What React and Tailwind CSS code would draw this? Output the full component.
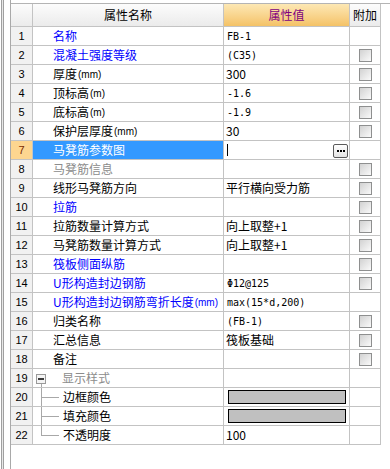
import React from 'react';

const CJK = { fontFamily: '"Noto Sans CJK SC", "Liberation Sans", sans-serif' };
const MONO = { fontFamily: '"DejaVu Sans Mono", "Liberation Mono", "Noto Sans CJK SC", monospace' };

const rows = [
  { n: 1, name: '名称', tone: 'blue', value: 'FB-1', mono: true },
  { n: 2, name: '混凝土强度等级', tone: 'blue', value: '(C35)', mono: true, cb: true },
  { n: 3, name: '厚度', unit: '(mm)', value: '300', cb: true },
  { n: 4, name: '顶标高', unit: '(m)', value: '-1.6', mono: true, cb: true },
  { n: 5, name: '底标高', unit: '(m)', value: '-1.9', mono: true, cb: true },
  { n: 6, name: '保护层厚度', unit: '(mm)', value: '30', cb: true },
  { n: 7, name: '马凳筋参数图', selected: true },
  { n: 8, name: '马凳筋信息', tone: 'gray', value: '', cb: true },
  { n: 9, name: '线形马凳筋方向', value: '平行横向受力筋', cb: true },
  { n: 10, name: '拉筋', tone: 'blue', value: '', cb: true },
  { n: 11, name: '拉筋数量计算方式', value: '向上取整+1', cb: true },
  { n: 12, name: '马凳筋数量计算方式', value: '向上取整+1', cb: true },
  { n: 13, name: '筏板侧面纵筋', tone: 'blue', value: '', cb: true },
  { n: 14, name: 'U形构造封边钢筋', tone: 'blue', value: 'Φ12@125', mono: true, cb: true },
  { n: 15, name: 'U形构造封边钢筋弯折长度', unit: '(mm)', tone: 'blue', value: 'max(15*d,200)', mono: true },
  { n: 16, name: '归类名称', value: '(FB-1)', mono: true, cb: true },
  { n: 17, name: '汇总信息', value: '筏板基础', cb: true },
  { n: 18, name: '备注', value: '', cb: true },
  { n: 19, name: '显示样式', tone: 'gray', group: true },
  { n: 20, name: '边框颜色', child: true, swatch: true },
  { n: 21, name: '填充颜色', child: true, swatch: true },
  { n: 22, name: '不透明度', child: true, value: '100', last: true },
];

const toneClass = {
  blue: 'text-[#0000ff]',
  gray: 'text-[#8c8c8c]',
};

const Checkbox = () => (
  <div className="w-[13px] h-[13px] border border-[#8e8f8f] bg-linear-to-br from-[#d2d2d2] to-[#fafafa]" />
);

const TreeLines = ({ row }) => {
  if (row.group) {
    return (
      <div className="relative w-[29px] h-full shrink-0">
        <div className="absolute left-[3px] top-[5px] w-[10px] h-[10px] border border-[#9a9a9a] bg-[#f4f4f4] flex items-center justify-center">
          <div className="w-[6px] h-[2px] bg-[#3a3a3a]" />
        </div>
        <div className="absolute left-[8px] top-[15px] bottom-[-1px] w-px bg-[#a8a8a8]" />
      </div>
    );
  }
  return (
    <div className="relative w-[30px] h-full shrink-0">
      <div className={`absolute left-[8px] top-[-1px] w-px bg-[#a8a8a8] ${row.last ? 'h-[10px]' : 'bottom-[-1px]'}`} />
      <div className="absolute left-[8px] top-[9px] w-[18px] h-px bg-[#a8a8a8]" />
    </div>
  );
};

const Row = ({ row }) => {
  const nameTone = row.selected ? 'text-white' : toneClass[row.tone] || 'text-black';
  return (
    <>
      <div
        className={`h-[19px] border-r border-b border-[#c3c3c3] flex items-center justify-center text-[11px] ${
          row.selected ? 'bg-[#fdd690] text-[#7b2b00]' : 'bg-[#f1f1f1] text-black'
        }`}
        style={{ fontFamily: '"Liberation Sans", sans-serif' }}
      >
        {row.n}
      </div>
      <div
        className={`h-[19px] border-r border-b border-[#c3c3c3] flex items-center text-[12px] whitespace-nowrap overflow-hidden ${
          row.selected ? 'bg-[#3399ff]' : 'bg-white'
        } ${row.group || row.child ? '' : 'pl-[20px]'} ${nameTone}`}
        style={CJK}
      >
        {(row.group || row.child) && <TreeLines row={row} />}
        <span>{row.name}</span>
        {row.unit && (
          <span className="text-[10px] ml-[1px]" style={{ fontFamily: '"Liberation Sans", sans-serif' }}>
            {row.unit}
          </span>
        )}
      </div>
      <div className="relative h-[19px] border-r border-b border-[#c3c3c3] bg-white flex items-center pl-[2px] text-[12px] text-black whitespace-nowrap overflow-hidden">
        {row.selected && (
          <>
            <div className="ml-[1px] w-px h-[12px] bg-black" />
            <div className="absolute right-[1px] top-[3px] w-[15px] h-[14px] rounded-[2px] border border-[#5a5a5a] bg-linear-to-b from-white to-[#e4e4e4] flex items-center justify-center gap-[1px]">
              <span className="w-[2px] h-[2px] bg-black" />
              <span className="w-[2px] h-[2px] bg-black" />
              <span className="w-[2px] h-[2px] bg-black" />
            </div>
          </>
        )}
        {row.swatch && (
          <div className="ml-[2px] w-[118px] h-[14px] border border-black bg-[#c0c0c0]" />
        )}
        {row.value && (
          <span className={row.mono ? 'text-[10px] ml-[1px]' : ''} style={row.mono ? MONO : CJK}>
            {row.value}
          </span>
        )}
      </div>
      <div className="h-[19px] border-r border-b border-[#c3c3c3] bg-white flex items-center justify-center">
        {row.cb && <Checkbox />}
      </div>
    </>
  );
};

export default function App() {
  return (
    <div className="w-[390px] h-[469px] bg-white flex overflow-hidden">
      {/* left splitter strip */}
      <div className="w-[10px] h-full flex shrink-0">
        <div className="w-px h-full bg-white" />
        <div className="w-px h-full bg-[#a0a0a0]" />
        <div className="w-px h-full bg-[#e8e8e8]" />
        <div className="w-px h-full bg-[#a0a0a0]" />
        <div className="flex-1 h-full bg-white" />
      </div>

      <div className="flex-1 h-full border-l border-[#a9a9a9] pt-[3px]">
        <div className="border-t border-[#b4b4b4]">
          <div className="grid grid-cols-[22px_191px_126px_31px] w-[370px]">
            {/* header */}
            <div className="h-[23px] border-r border-b border-[#c3c3c3] bg-linear-to-b from-[#fcfcfc] to-[#ebebeb]" />
            <div
              className="h-[23px] border-r border-b border-[#c3c3c3] bg-linear-to-b from-[#fcfcfc] to-[#ebebeb] flex items-center justify-center text-[12px] text-black"
              style={CJK}
            >
              属性名称
            </div>
            <div
              className="h-[23px] border-r border-b border-[#c3c3c3] bg-linear-to-b from-[#fde8b4] to-[#f4c266] flex items-center justify-center text-[12px] text-[#800080]"
              style={CJK}
            >
              属性值
            </div>
            <div
              className="h-[23px] border-r border-b border-[#c3c3c3] bg-linear-to-b from-[#fcfcfc] to-[#ebebeb] flex items-center justify-center text-[12px] text-black"
              style={CJK}
            >
              附加
            </div>

            {rows.map((row) => (
              <Row key={row.n} row={row} />
            ))}
          </div>
        </div>
      </div>
    </div>
  );
}
